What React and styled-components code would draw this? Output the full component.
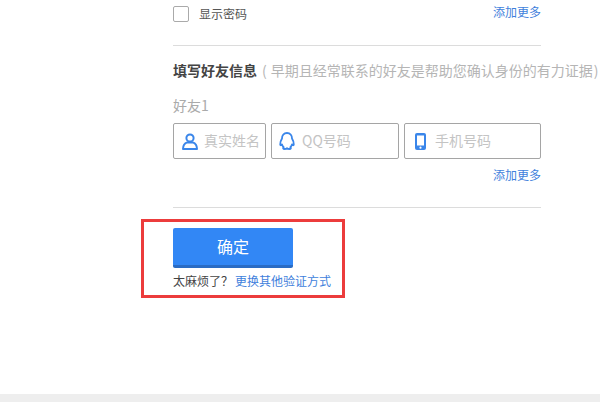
import React from "react";
import styled, { createGlobalStyle } from "styled-components";

const Global = createGlobalStyle`
  html, body { margin: 0; padding: 0; background: #fff; }
  body { font-family: "Microsoft YaHei", "Noto Sans CJK SC", "Liberation Sans", sans-serif; overflow: hidden; }
`;
const Page = styled.div`
  width: 600px; height: 402px; display: flex; flex-direction: column; overflow: hidden;
`;
const Main = styled.main`
  flex: 1; padding: 6px 0 0 173px; width: 368px; box-sizing: content-box;
`;
const TopRow = styled.div`
  display: flex; align-items: center; height: 16px;
`;
const Check = styled.span`
  width: 14px; height: 14px; border: 1px solid #aaa; border-radius: 2px; margin-right: 10px; display: block;
`;
const CheckLabel = styled.span`
  font-size: 12px; color: #555; line-height: 16px;
`;
const MoreLink = styled.a`
  font-size: 12px; color: #3f7fdc; margin-left: auto; line-height: 16px; white-space: nowrap;
  margin-bottom: ${p => p.$lift || 0}px;
`;
const Divider = styled.hr`
  border: 0; height: 1px; background: #dcdcdc; width: 368px;
  margin: ${p => p.$top}px 0 0;
`;
const TitleRow = styled.div`
  margin-top: 14px; height: 20px; line-height: 20px; font-size: 14px; white-space: nowrap; color: #b5b5b5;
  display: flex; align-items: center;
  b { color: #444; font-weight: 700; margin-right: 5px; }
`;
const Note = styled.span`
  margin: 0 1px 0 4px;
`;
const FriendLabel = styled.div`
  margin-top: 15px; font-size: 14px; line-height: 20px; color: #aaa;
`;
const Fields = styled.div`
  display: flex; gap: 5px; margin-top: 8px;
`;
const Field = styled.div`
  width: ${p => p.$w}px; height: 36px; box-sizing: border-box; border: 1px solid #a5a5a5; border-radius: 2px;
  display: flex; align-items: center; padding-left: ${p => p.$pad}px; gap: ${p => p.$gap}px;
  white-space: nowrap; overflow: hidden;
`;
const Placeholder = styled.span`
  font-size: 14px; line-height: 20px; color: #c4c4c4; margin-bottom: 2px;
`;
const MoreRow = styled.div`
  display: flex; height: 16px; margin-top: 8px;
`;
const Submit = styled.div`
  position: relative; margin-top: 20px; width: 120px;
`;
const Highlight = styled.div`
  position: absolute; left: -32px; top: -9px; width: 198px; height: 73px; border: 3px solid #ec3c3c; pointer-events: none;
`;
const Button = styled.button`
  display: block; width: 120px; height: 40px; padding: 0 0 1px; box-sizing: border-box; border: 0;
  border-bottom: 3px solid #2a6cc4; border-radius: 2px; background: #3287f5; color: #fff;
  font: inherit; font-size: 16px;
`;
const Hint = styled.div`
  margin-top: 5px; font-size: 12px; line-height: 16px; color: #444; white-space: nowrap;
  display: flex; gap: 2px;
  a { color: #3f7fdc; }
`;
const Footer = styled.footer`
  height: 8px; background: #eee;
`;

const User = () => (
  <svg width="16" height="17" viewBox="0 0 16 17" fill="none" stroke="#3a86ea" strokeWidth="2">
    <circle cx="8" cy="5" r="3.6" />
    <path d="M1 16c0-3.6 2-5.8 4.3-6.6h5.4C13 10.2 15 12.4 15 16z" strokeLinejoin="round" />
  </svg>
);
const QQ = () => (
  <svg width="16" height="18" viewBox="0 0 16 18" fill="none" stroke="#3a86ea" strokeWidth="1.8">
    <path d="M8 1C4.8 1 3 3.4 3 6.4 2 8 1 10 1.2 12.4c.1 1.2 1 1 1.8 0 .3 1.2.9 2.2 1.7 2.8-1 .6-.8 1.8 1 1.8 1 0 1.7-.3 2.3-.8.6.5 1.3.8 2.3.8 1.8 0 2-1.2 1-1.8.8-.6 1.4-1.6 1.7-2.8.8 1 1.7 1.2 1.8 0 .2-2.4-.8-4.4-1.8-6 0-3-1.8-5.4-5-5.4z" strokeLinejoin="round" />
  </svg>
);
const Phone = () => (
  <svg width="11" height="17" viewBox="0 0 11 17">
    <rect x="0" y="0" width="11" height="17" rx="2" fill="#3a86ea" />
    <rect x="2" y="2.5" width="7" height="10" fill="#fff" />
    <circle cx="5.5" cy="14.7" r="1.1" fill="#fff" />
  </svg>
);

export default function App() {
  return (
    <Page>
      <Global />
      <Main>
        <TopRow>
          <Check />
          <CheckLabel>显示密码</CheckLabel>
          <MoreLink $lift={4}>添加更多</MoreLink>
        </TopRow>
        <Divider $top={23} />
        <TitleRow>
          <b>填写好友信息</b>(<Note>早期且经常联系的好友是帮助您确认身份的有力证据</Note>)
        </TitleRow>
        <FriendLabel>好友1</FriendLabel>
        <Fields>
          <Field $w={93} $pad={8} $gap={6}><User /><Placeholder>真实姓名</Placeholder></Field>
          <Field $w={128} $pad={7} $gap={7}><QQ /><Placeholder>QQ号码</Placeholder></Field>
          <Field $w={137} $pad={10} $gap={9}><Phone /><Placeholder>手机号码</Placeholder></Field>
        </Fields>
        <MoreRow><MoreLink>添加更多</MoreLink></MoreRow>
        <Divider $top={24} />
        <Submit>
          <Highlight />
          <Button>确定</Button>
          <Hint>太麻烦了？<a>更换其他验证方式</a></Hint>
        </Submit>
      </Main>
      <Footer />
    </Page>
  );
}
